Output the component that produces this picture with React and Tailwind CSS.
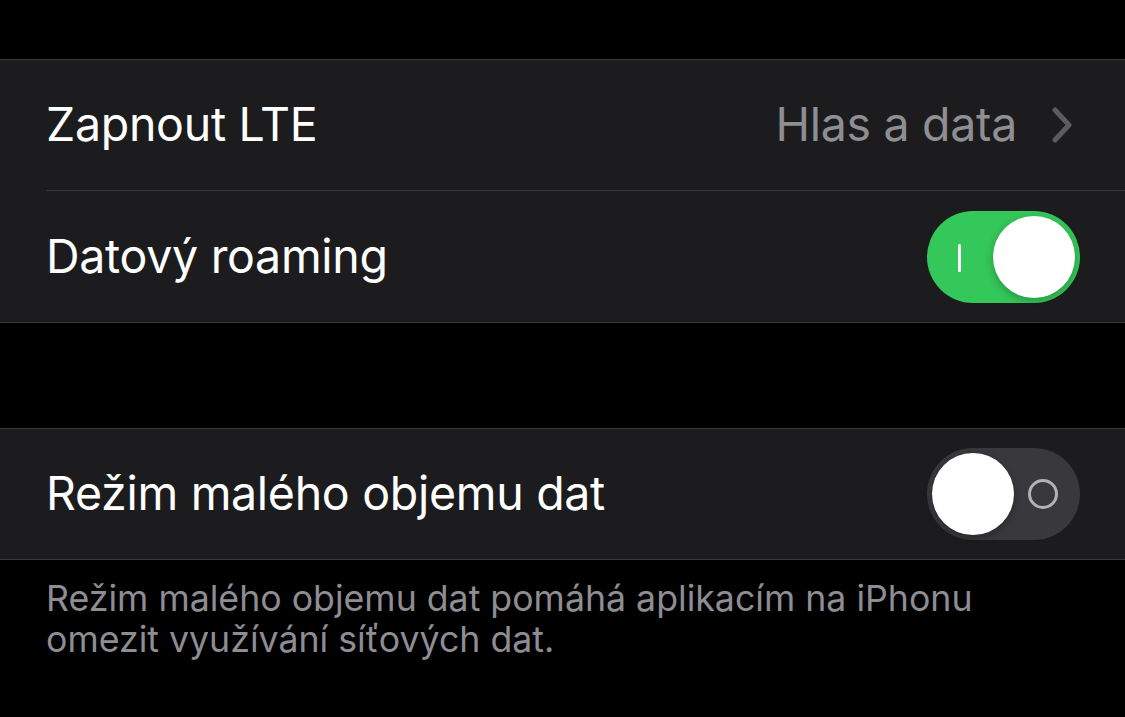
import React from "react";

function ToggleOn() {
  return (
    <div className="relative w-[153px] h-[92px] rounded-full bg-[#34c759] flex items-center justify-end pr-[5px]">
      <div className="absolute left-[31px] top-[33px] w-[3px] h-[28px] bg-white rounded-full" />
      <div className="w-[82px] h-[82px] rounded-full bg-white shadow-[0_3px_8px_rgba(0,0,0,0.25)]" />
    </div>
  );
}

function ToggleOff() {
  return (
    <div className="relative w-[153px] h-[92px] rounded-full bg-[#39393d] flex items-center pl-[5px]">
      <div className="w-[82px] h-[82px] rounded-full bg-white shadow-[0_3px_8px_rgba(0,0,0,0.3)]" />
      <div className="absolute right-[22px] top-[31px] w-[30px] h-[30px] rounded-full border-[3px] border-[#b3b3b7]" />
    </div>
  );
}

export default function App() {
  const font = { fontFamily: "Inter, 'Noto Sans', sans-serif" };
  return (
    <div className="w-[1125px] h-[717px] bg-black text-white overflow-hidden" style={font}>
      <div className="h-[59px]" />
      <div className="bg-[#1c1c1e] border-t border-b border-[#3a3a3c]">
        <div className="h-[130px] flex items-center pl-[46px] pr-[50px]">
          <div className="flex-1 flex items-center h-full">
            <span className="text-[46.5px] tracking-[-0.3px]">Zapnout LTE</span>
          </div>
          <span className="text-[46.5px] text-[#8e8e93] mr-[34px] tracking-[-0.3px]">Hlas a data</span>
          <svg width="22" height="36" viewBox="0 0 22 36" className="mr-[2px]">
            <path d="M4 3 L18 18 L4 33" fill="none" stroke="#5b5b60" strokeWidth="5" strokeLinecap="round" strokeLinejoin="round" />
          </svg>
        </div>
        <div className="ml-[46px] h-px bg-[#3a3a3c]" />
        <div className="h-[131px] flex items-center pl-[46px] pr-[45px]">
          <span className="flex-1 text-[46.5px] tracking-[-0.3px]">Datový roaming</span>
          <ToggleOn />
        </div>
      </div>
      <div className="h-[105px]" />
      <div className="bg-[#1c1c1e] border-t border-b border-[#3a3a3c]">
        <div className="h-[130px] flex items-center pl-[46px] pr-[45px]">
          <span className="flex-1 text-[46.5px] tracking-[-0.3px]">Režim malého objemu dat</span>
          <ToggleOff />
        </div>
      </div>
      <div className="pl-[46px] pt-[18px] text-[35.7px] leading-[41px] text-[#8d8d93]">
        <div>Režim malého objemu dat pomáhá aplikacím na iPhonu</div>
        <div>omezit využívání síťových dat.</div>
      </div>
    </div>
  );
}
